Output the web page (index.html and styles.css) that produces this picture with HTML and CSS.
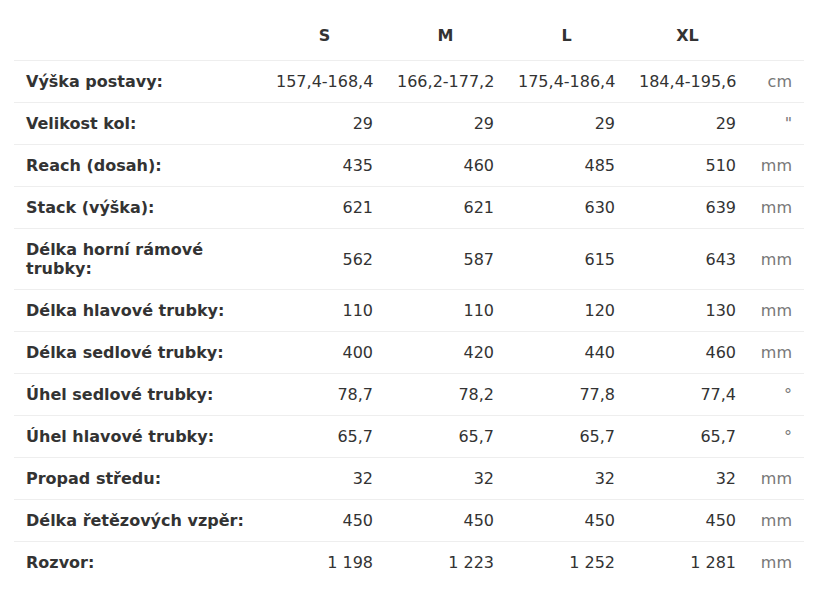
FILE: index.html
```html
<!DOCTYPE html>
<html lang="cs">
<head>
<meta charset="utf-8">
<link rel="stylesheet" href="styles.css">
</head>
<body>
<table class="geo">
  <colgroup>
    <col class="c-label"><col class="c-val"><col class="c-val"><col class="c-val"><col class="c-val"><col class="c-unit">
  </colgroup>
  <thead>
    <tr><th></th><th>S</th><th>M</th><th>L</th><th>XL</th><th></th></tr>
  </thead>
  <tbody>
    <tr><td class="lbl">Výška postavy:</td><td>157,4-168,4</td><td>166,2-177,2</td><td>175,4-186,4</td><td>184,4-195,6</td><td class="unit">cm</td></tr>
    <tr><td class="lbl">Velikost kol:</td><td>29</td><td>29</td><td>29</td><td>29</td><td class="unit">"</td></tr>
    <tr><td class="lbl">Reach (dosah):</td><td>435</td><td>460</td><td>485</td><td>510</td><td class="unit">mm</td></tr>
    <tr><td class="lbl">Stack (výška):</td><td>621</td><td>621</td><td>630</td><td>639</td><td class="unit">mm</td></tr>
    <tr><td class="lbl">Délka horní rámové trubky:</td><td>562</td><td>587</td><td>615</td><td>643</td><td class="unit">mm</td></tr>
    <tr><td class="lbl">Délka hlavové trubky:</td><td>110</td><td>110</td><td>120</td><td>130</td><td class="unit">mm</td></tr>
    <tr><td class="lbl">Délka sedlové trubky:</td><td>400</td><td>420</td><td>440</td><td>460</td><td class="unit">mm</td></tr>
    <tr><td class="lbl">Úhel sedlové trubky:</td><td>78,7</td><td>78,2</td><td>77,8</td><td>77,4</td><td class="unit">°</td></tr>
    <tr><td class="lbl">Úhel hlavové trubky:</td><td>65,7</td><td>65,7</td><td>65,7</td><td>65,7</td><td class="unit">°</td></tr>
    <tr><td class="lbl">Propad středu:</td><td>32</td><td>32</td><td>32</td><td>32</td><td class="unit">mm</td></tr>
    <tr><td class="lbl">Délka řetězových vzpěr:</td><td>450</td><td>450</td><td>450</td><td>450</td><td class="unit">mm</td></tr>
    <tr><td class="lbl">Rozvor:</td><td>1 198</td><td>1 223</td><td>1 252</td><td>1 281</td><td class="unit">mm</td></tr>
  </tbody>
</table>
</body>
</html>
```
FILE: styles.css
```css
html, body {
  margin: 0;
  padding: 0;
  background: #fff;
}
body {
  padding: 14px;
  font-family: "DejaVu Sans", sans-serif;
  font-size: 16px;
  line-height: 19px;
  color: #333;
}
.geo {
  width: 790px;
  border-collapse: collapse;
  table-layout: fixed;
}
.c-label { width: 250px; }
.c-val { width: 121px; }
.c-unit { width: 56px; }
.geo th {
  padding: 12px 12px 15px;
  font-weight: bold;
  text-align: center;
}
.geo td {
  padding: 11px 12px;
  text-align: right;
  border-top: 1px solid #eee;
  vertical-align: middle;
  white-space: nowrap;
}
.geo td.lbl {
  text-align: left;
  font-weight: bold;
  white-space: normal;
}
.geo td.unit {
  color: #777;
}
```
